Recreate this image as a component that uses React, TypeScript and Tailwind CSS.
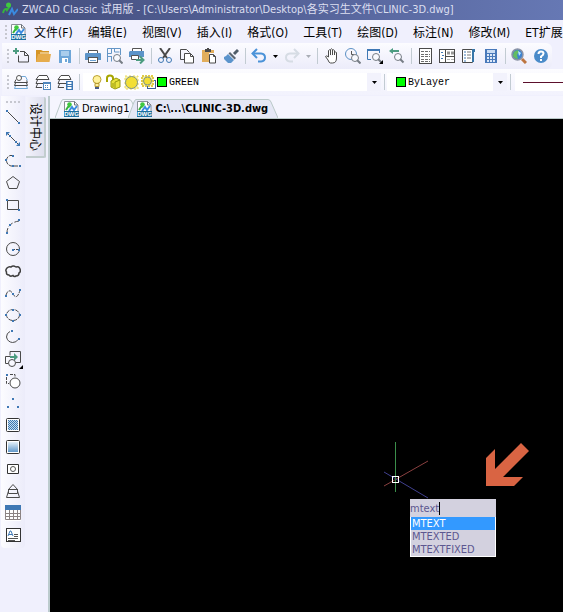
import { useState } from "react";
import type { ReactNode } from "react";

type Tool = { name: string; icon: ReactNode };

const ui = "font-['DejaVu_Sans_Condensed','Noto_Sans_CJK_SC',sans-serif]";

function Svg({ children, w = 16, h = 16 }: { children: ReactNode; w?: number; h?: number }) {
  return (
    <svg width={w} height={h} viewBox={`0 0 ${w} ${h}`} fill="none" className="block shrink-0" aria-hidden="true">
      {children}
    </svg>
  );
}

const ink = "#4a4a4a";
const blue = "#3f78b4";

function Dot({ x, y }: { x: number; y: number }) {
  return <rect x={x} y={y} width="2" height="2" fill={blue} />;
}

function LogoMark() {
  return (
    <g>
      <path d="M1 11c1-4 3-5 4-3l3-4" stroke="#35b53c" strokeWidth="2" />
      <circle cx="6.500" cy="3" r="2.500" fill="#3fc840" />
      <path d="M7 13l3-6 2 5 4-5" stroke="#3a8be0" strokeWidth="2" />
    </g>
  );
}

function DwgIcon() {
  return (
    <Svg>
      <path d="M1.500 .5h10l3.500 3.500v11.500H1.500z" fill="#fff" stroke="#8a9099" />
      <path d="M11.500 .5v3.500H15" stroke="#6b7078" />
      <path d="M3 9l2-3 2-1" stroke="#35b53c" strokeWidth="2" />
      <circle cx="6.500" cy="3.500" r="2.300" fill="#3fc840" />
      <path d="M6 10l3-4 2 3 3-4" stroke="#3a8be0" strokeWidth="2" />
      <rect x="1" y="10" width="15" height="6" fill="#1c6f9e" />
      <text x="8.500" y="15" textAnchor="middle" fontSize="6" fontWeight="700" fill="#fff" fontFamily="Liberation Sans, sans-serif">DWG</text>
    </Svg>
  );
}

function Lens({ x, y }: { x: number; y: number }) {
  return (
    <g stroke="#777d85">
      <circle cx={x} cy={y} r="3.500" fill="#f8f9fe" />
      <path d={`M${x + 2} ${y + 2}l3.500 3.500`} strokeWidth="2" />
    </g>
  );
}

function Printer() {
  return (
    <g>
      <rect x="3" y="2" width="10" height="4" fill="#fff" />
      <path d="M3.500 6V2.500h9V6" stroke="#555" />
      <path d="M1 5h14a1 1 0 0 1 1 1v6H0V6a1 1 0 0 1 1-1z" fill="#5c94c9" />
      <rect x="3.500" y="9.500" width="9" height="5" fill="#fff" stroke="#555" />
      <path d="M5 12.500h6" stroke="#6aa0d2" />
    </g>
  );
}

const fileTools: Tool[] = [
  {
    name: "New",
    icon: (
      <Svg>
        <path d="M5.500 7.500v6.500h10V7.500l-4-4H7" stroke={ink} />
        <path d="M11.500 3.500v4h4" stroke={ink} />
        <path d="M0 3h6M3 0v6" stroke="#4c9c80" strokeWidth="2" />
      </Svg>
    ),
  },
  {
    name: "Open",
    icon: (
      <Svg>
        <path d="M1 2h5l2 1h6v3H1z" fill="#d69526" />
        <path d="M1 5h2v9H1z" fill="#d69526" />
        <path d="M3 6h13l-1.500 8H1z" fill="#e6ac4c" />
        <path d="M5 5h10" stroke="#fff3d8" />
      </Svg>
    ),
  },
  {
    name: "Save",
    icon: (
      <Svg>
        <rect x="2" y="2" width="12" height="13" fill="#6ea6d8" />
        <rect x="4" y="3" width="8" height="5" fill="#a9cdec" />
        <rect x="5" y="10" width="6" height="5" fill="#fff" />
        <rect x="8" y="11" width="2" height="3" fill="#6ea6d8" />
      </Svg>
    ),
  },
];

const printTools: Tool[] = [
  { name: "Print", icon: <Svg><Printer /></Svg> },
  {
    name: "Print preview",
    icon: (
      <Svg>
        <path d="M.5 14V.5h13V7M.5 5.500h4v-5M5 8.500H1M7.500 1v3h5M4.500 13.500V9" stroke="#6596c6" />
        <Lens x={10} y={10} />
      </Svg>
    ),
  },
  {
    name: "Publish",
    icon: (
      <Svg>
        <path d="M3.500 4V.5h9V4" fill="#fff" stroke="#555" />
        <path d="M1 3h14v6H0V4z" fill="#5c94c9" />
        <path d="M2.500 7.500h7v4h-7z" fill="#fff" stroke="#555" />
        <path d="M7 12h7M11 8.500l3.500 3.500-3.500 3.500" stroke="#4c9c80" strokeWidth="2" />
      </Svg>
    ),
  },
];

const editTools: Tool[] = [
  {
    name: "Cut",
    icon: (
      <Svg>
        <path d="M3 0l7 10M13 0L6 10" stroke="#4a4a4a" strokeWidth="2" />
        <circle cx="4" cy="12" r="2.500" stroke={blue} />
        <circle cx="12" cy="12" r="2.500" stroke={blue} />
      </Svg>
    ),
  },
  {
    name: "Copy",
    icon: (
      <Svg>
        <path d="M5 11.500H1.500V1.500h6l3 3" stroke={ink} />
        <path d="M5.500 5.500h6l3 3v6.500h-9z" fill="#fff" stroke={ink} />
        <path d="M11.500 5.500v3h3" stroke={ink} />
      </Svg>
    ),
  },
  {
    name: "Paste",
    icon: (
      <Svg>
        <path d="M1 2h12v3H8v9H1z" fill="#e2ae5c" />
        <path d="M4 1h2V0h2v1h2v3H4z" fill="#4a4a4a" />
        <path d="M8.500 6.500h4l2 2V15h-6z" fill="#fff" stroke={ink} />
        <path d="M12.500 6.500v2h2" stroke={ink} />
      </Svg>
    ),
  },
  {
    name: "Match properties",
    icon: (
      <Svg>
        <path d="M15 2l-4 4" stroke="#4f5c68" strokeWidth="3" />
        <path d="M7 4l6 6-1.500 1.500-6-6z" fill="#5b6672" />
        <path d="M5 6l6 6-3 3H5l-4-4v-2l2-1z" fill="#5b94cc" />
      </Svg>
    ),
  },
];

const viewTools: Tool[] = [
  {
    name: "Pan",
    icon: (
      <Svg>
        <path d="M5.500 9V2.500q1-1.500 2 0V7M7.500 7V1.500q1-1.500 2 0V7M9.500 7V2.500q1-1.500 2 0V7M11.500 7V4.500q1-1 2 0V10q0 5-4 5H7.500Q6 15 5 12L2.500 8.500q1-1.500 3 .5" fill="#fff" stroke={ink} />
      </Svg>
    ),
  },
  {
    name: "Zoom realtime",
    icon: (
      <Svg>
        <circle cx="6" cy="6" r="5.500" stroke="#5c90c4" />
        <path d="M6.500 3v3.500H9" stroke="#555" />
        <Lens x={10} y={10} />
      </Svg>
    ),
  },
  {
    name: "Zoom window",
    icon: (
      <Svg>
        <path d="M4 11.500H.5v-10h12V5" stroke={blue} />
        <path d="M0 2h13" stroke={blue} strokeWidth="2" />
        <Lens x={9} y={9} />
        <path d="M16 12v4h-4z" fill="#000" />
      </Svg>
    ),
  },
  {
    name: "Zoom previous",
    icon: (
      <Svg>
        <path d="M2 3h8" stroke="#4c9c80" strokeWidth="2" />
        <path d="M0 3l4-3v6z" fill="#4c9c80" />
        <Lens x={9} y={9} />
      </Svg>
    ),
  },
];

const panelTools: Tool[] = [
  {
    name: "Properties",
    icon: (
      <Svg>
        <rect x="2.500" y=".5" width="12" height="15" fill="#fff" stroke={ink} />
        <path d="M4 3.500h9M4 6.500h9M4 8.500h9M4 11.500h9M4 13.500h9" stroke="#6c6c6c" strokeDasharray="3 1" />
      </Svg>
    ),
  },
  {
    name: "Design center",
    icon: (
      <Svg>
        <rect x=".5" y="1.500" width="15" height="13" fill="#fff" stroke={ink} />
        <path d="M6.500 2v12M7 8.500h8" stroke={ink} />
        <path d="M8 5h3M12 5h3" stroke="#969696" strokeWidth="3" />
        <path d="M8 11.500h3M12 11.500h3" stroke="#b5b5b5" />
        <path d="M2 4.500h2M3 7.500h2M2 10.500h2" stroke={blue} />
      </Svg>
    ),
  },
  {
    name: "Tool palettes",
    icon: (
      <Svg>
        <path d="M1.500 1.500h10v13h-10z" fill="#fff" stroke={ink} />
        <path d="M11 1h3v3h-1v10h-2" fill="#3675a8" />
        <path d="M3 4h2M3 7h2M3 10h2M3 13h2" stroke={blue} />
        <path d="M6 4h4M6 7h4M6 10h4" stroke="#777" />
      </Svg>
    ),
  },
  {
    name: "Calculator",
    icon: (
      <Svg>
        <rect x="2" y="1" width="12" height="14" fill="#4979ba" />
        <rect x="4" y="2" width="8" height="3" fill="#c9dcf4" />
        <path d="M4 7h8M4 10h8M4 13h8" stroke="#dce8f8" strokeWidth="2" strokeDasharray="2 1" />
      </Svg>
    ),
  },
];

const helpTools: Tool[] = [
  {
    name: "Find",
    icon: (
      <Svg>
        <circle cx="6.500" cy="6.500" r="5.500" fill="#3d82d0" stroke="#8b93a5" strokeWidth="1.500" />
        <path d="M3 4q3-3 5-1L6 7l1 4Q2 10 2 7z" fill="#64bd61" />
        <path d="M7 3l3 2-2 3z" fill="#bcecff" />
        <path d="M11 11l4 4" stroke="#bd7541" strokeWidth="3" />
      </Svg>
    ),
  },
  {
    name: "Help",
    icon: (
      <Svg>
        <circle cx="8" cy="8" r="7" fill="#4a8bc9" />
        <path d="M5.500 6q0-2.500 2.500-2.500t2.500 2q0 1.500-2.500 3v1.500M8 11v2" stroke="#fff" strokeWidth="2" />
      </Svg>
    ),
  },
];

function Layers({ children }: { children?: ReactNode }) {
  return (
    <Svg>
      <path d="M4 1.500h8l2 4H1z" fill="#fff" stroke={ink} />
      <path d="M2.500 6L1 9.500h13M2.500 10L1 13.500h6" stroke={ink} />
      {children}
    </Svg>
  );
}

const layerTools: Tool[] = [
  {
    name: "Layer manager",
    icon: (
      <Svg>
        <path d="M8 2.500h4.500l2 4" stroke="#71a9d8" />
        <path d="M3 5.500L1.500 8.500h13l-1-2M2.500 9L1.500 11.500h13L13.500 9" stroke={ink} />
        <path d="M2.500 12L1.500 14.500h13L13.500 12" stroke="#71a9d8" />
        <circle cx="6" cy="4" r="2.500" fill="#fff" stroke="#555" />
      </Svg>
    ),
  },
  {
    name: "Layer states",
    icon: (
      <Layers>
        <rect x="8" y="8" width="8" height="8" fill="#4f86bd" />
        <rect x="9" y="10" width="6" height="5" fill="#fff" />
        <path d="M10 11.500h4M10 13.500h4" stroke="#4f86bd" strokeDasharray="1 1" />
      </Layers>
    ),
  },
  {
    name: "Layer properties",
    icon: (
      <Layers>
        <rect x="9" y="7" width="7" height="9" fill={blue} />
        <path d="M10.500 9h4M10.500 14h4" stroke="#fff" strokeWidth="2" />
        <path d="M10.500 11.500h4" stroke="#fff" />
      </Layers>
    ),
  },
];

const drawTools: Tool[] = [
  { name: "Line", icon: <Svg><path d="M2 2l12 12" stroke={ink} /><Dot x={1} y={1} /><Dot x={13} y={13} /></Svg> },
  {
    name: "Construction line",
    icon: (
      <Svg>
        <path d="M2 2l12 12" stroke={ink} />
        <path d="M1 1h4L1 5zM15 15v-4l-4 4z" fill={blue} />
        <Dot x={4} y={4} /><Dot x={10} y={10} />
      </Svg>
    ),
  },
  {
    name: "Polyline",
    icon: (
      <Svg>
        <path d="M8 2.500H5Q1.500 4 1.500 7.500q0 4 4.500 5.500h8" stroke={ink} strokeDasharray="4 1" />
        <Dot x={7} y={2} /><Dot x={0} y={6} /><Dot x={7} y={12} /><Dot x={14} y={12} />
      </Svg>
    ),
  },
  { name: "Polygon", icon: <Svg><path d="M8 1.500l6.500 5-2.500 7H4l-2.500-7z" stroke={ink} /></Svg> },
  { name: "Rectangle", icon: <Svg><path d="M2.500 3.500h11v9h-11z" stroke={ink} /><Dot x={1} y={2} /><Dot x={13} y={12} /></Svg> },
  { name: "Arc", icon: <Svg><path d="M2 14Q2 4 14 2" stroke={ink} strokeDasharray="5 2" /><Dot x={1} y={13} /><Dot x={4} y={5} /><Dot x={13} y={0} /></Svg> },
  { name: "Circle", icon: <Svg><circle cx="8" cy="8" r="6.500" stroke={ink} /><path d="M8 8.500h6" stroke={ink} strokeDasharray="2 1" /><Dot x={7} y={8} /><Dot x={13} y={8} /></Svg> },
  {
    name: "Revision cloud",
    icon: <Svg><path d="M4 12Q1 12 1.500 9 0 7 2 5q2-2 4-1 2-2 5 0 3-1 4 2 1 3-1 4 0 3-3 3-2 1-3-.5Q5 14 4 12z" stroke="#3f3f3f" strokeWidth="1.500" /></Svg>,
  },
  { name: "Spline", icon: <Svg><path d="M1 10q3-8 7-1t7-4" stroke={ink} strokeDasharray="4 1" /><Dot x={0} y={10} /><Dot x={7} y={8} /><Dot x={14} y={4} /></Svg> },
  {
    name: "Ellipse",
    icon: (
      <Svg>
        <ellipse cx="8" cy="8" rx="6.500" ry="5.500" stroke={ink} strokeDasharray="4 1" />
        <Dot x={7} y={2} /><Dot x={0} y={7} /><Dot x={14} y={7} /><Dot x={7} y={13} />
      </Svg>
    ),
  },
  { name: "Elliptical arc", icon: <Svg><path d="M5 2.500Q1.500 4 1.500 8q1 5 6 5.500 4 0 5.500-3" stroke={ink} /><Dot x={6} y={1} /><Dot x={13} y={9} /></Svg> },
  {
    name: "Insert block",
    icon: (
      <Svg>
        <path d="M5 4.500V.5h10.500v11H11M3 12.500H.5V5.500H5" stroke={ink} />
        <path d="M5 6h5" stroke="#4c9c80" strokeWidth="2" />
        <path d="M9 2l4 4-4 4z" fill="#4c9c80" />
        <circle cx="7" cy="12" r="3.500" fill="#f8f8ff" stroke={ink} />
      </Svg>
    ),
  },
  { name: "Make block", icon: <Svg><path d="M5 1.500h5V4M1.500 4v6.500H4" stroke={ink} strokeDasharray="3 1" /><circle cx="10" cy="10" r="5" fill="#fff" stroke={ink} /><Dot x={1} y={1} /></Svg> },
  { name: "Point", icon: <Svg><Dot x={7} y={3} /><Dot x={2} y={11} /><Dot x={12} y={11} /></Svg> },
  {
    name: "Hatch",
    icon: (
      <Svg>
        <defs>
          <pattern id="check" width="2" height="2" patternUnits="userSpaceOnUse">
            <rect width="2" height="2" fill="#c2dcf1" />
            <path d="M0 0h1v1H0zM1 1h1v1H1z" fill="#3e78b0" />
          </pattern>
        </defs>
        <rect x="1.500" y="1.500" width="13" height="13" rx="1" fill="#fff" stroke="#333" />
        <rect x="3" y="3" width="10" height="10" fill="url(#check)" />
      </Svg>
    ),
  },
  {
    name: "Gradient",
    icon: (
      <Svg>
        <defs>
          <linearGradient id="fade" x2="0" y2="1">
            <stop stopColor="#e2eff9" />
            <stop offset="1" stopColor="#6198ca" />
          </linearGradient>
        </defs>
        <rect x="1.500" y="1.500" width="13" height="13" rx="1" fill="#fff" stroke="#333" />
        <rect x="3" y="3" width="10" height="10" fill="url(#fade)" />
      </Svg>
    ),
  },
  { name: "Region", icon: <Svg><path d="M2.500 3.500h11v9h-11z" fill="#fff" stroke="#333" /><circle cx="8" cy="8" r="2.500" stroke="#555" /></Svg> },
  { name: "Wipeout", icon: <Svg><path d="M3.500 6.500L8 1.500l4.500 5v4h-9zM3.500 8L1.500 14.500h13L12.500 8M3 6.500h10" stroke={ink} /></Svg> },
  {
    name: "Table",
    icon: (
      <Svg>
        <rect y="1" width="16" height="15" fill="#fff" />
        <path d="M.5 5v9.500h15V5M4.500 5v10M8.500 5v10M12.500 5v10M1 8.500h14M1 11.500h14" stroke="#8b8383" />
        <rect y="0" width="16" height="5" fill={blue} />
      </Svg>
    ),
  },
  {
    name: "Multiline text",
    icon: (
      <Svg>
        <rect x="1.500" y="1.500" width="14" height="13" fill="#fff" stroke="#333" />
        <path d="M3 9l2-5h1l2 5M4 7.500h3" stroke={blue} />
        <path d="M9 7.500h4M9 9.500h4M3 11.500h10M3 13.500h7" stroke="#555" />
      </Svg>
    ),
  },
];

const menus = ["文件(F)", "编辑(E)", "视图(V)", "插入(I)", "格式(O)", "工具(T)", "绘图(D)", "标注(N)", "修改(M)", "ET扩展工具(X)"];

function Grip() {
  return (
    <span className="flex w-2 shrink-0 flex-col items-end gap-[2px] pr-[1px]">
      {[0, 1, 2, 3].map((i) => <i key={i} className="size-[2px] bg-[#c6c7cf]" />)}
    </span>
  );
}

function Divider() {
  return (
    <span className="flex h-full w-[6px] shrink-0 items-center justify-center">
      <i className="h-4 w-px bg-[#c2cbd2]" />
    </span>
  );
}

function Tools({ items }: { items: Tool[] }) {
  return (
    <>
      {items.map((t) => (
        <button key={t.name} aria-label={t.name} className="flex size-[22px] shrink-0 items-center justify-center">
          {t.icon}
        </button>
      ))}
    </>
  );
}

function Caret({ color = "#000" }: { color?: string }) {
  return <Svg w={5} h={3}><path d="M0 0h5L2.500 3z" fill={color} /></Svg>;
}

function History({ name, color, flip, caret }: { name: string; color: string; flip?: boolean; caret: string }) {
  return (
    <>
      <button aria-label={name} className="flex size-[22px] shrink-0 items-center justify-center">
        <Svg>
          <g transform={flip ? "matrix(-1 0 0 1 16 0)" : undefined}>
            <path d="M3 5.500h7q4 .5 4 4t-4 4H7" stroke={color} strokeWidth="2" />
            <path d="M6 1L1.500 5.500 6 10" stroke={color} strokeWidth="2" />
          </g>
        </Svg>
      </button>
      <button aria-label={`${name} list`} className="flex h-[22px] w-[11px] shrink-0 items-center justify-center">
        <Caret color={caret} />
      </button>
    </>
  );
}

function Choice({ label, value }: { label: string; value: string }) {
  return (
    <span className="relative flex h-full min-w-0 flex-1 items-center">
      <select aria-label={label} defaultValue={value} className="h-full w-full appearance-none bg-transparent font-['Liberation_Mono',monospace] text-[10px] text-black outline-none">
        <option>{value}</option>
      </select>
      <span className="pointer-events-none absolute inset-y-0 right-0 flex w-[14px] items-center justify-center bg-[#f2f2fc]">
        <Caret />
      </span>
    </span>
  );
}

function LayerStatus() {
  return (
    <span className="flex shrink-0 items-center gap-[2px] pr-[1px] pl-2">
      <Svg w={12}>
        <circle cx="6" cy="5.500" r="4" fill="#fff29b" stroke="#bda233" />
        <path d="M4 9.500h4v3H4z" fill="#fff0a0" stroke="#b79b31" />
        <path d="M4 14h4" stroke="#4a5c86" strokeWidth="2" />
      </Svg>
      <Svg>
        <path d="M2 8V4q0-2.500 3-2.500T8 4v4" stroke="#a7a500" strokeWidth="2" />
        <path d="M6 7l5-3 4 2v7l-5 2-4-2z" fill="#e8e23a" stroke="#98980f" />
        <path d="M10 8v6M10 8l5-2M7 10h2M7 12h2" stroke="#98980f" />
      </Svg>
      <Svg>
        <path d="M2 2h13v13H2z" fill="#fbf3a8" stroke="#e8d65d" strokeDasharray="2 2" />
        <circle cx="8.500" cy="8.500" r="6" fill="#f3df35" stroke="#7c928a" />
      </Svg>
      <Svg w={15}>
        <rect x="6.500" y="6.500" width="8" height="8" fill="#fff" stroke="#3d609b" />
        <path d="M1 2h11v10H1z" fill="#fbf3a8" stroke="#dfcb49" strokeWidth="2" strokeDasharray="2 1" />
        <circle cx="6.500" cy="7" r="4" fill="#f3df35" stroke="#7c928a" />
      </Svg>
    </span>
  );
}

function Swatch() {
  return <i className="mr-[2px] size-[10px] shrink-0 border border-black bg-[#00ff00]" />;
}

function Tab({ label, active }: { label: string; active?: boolean }) {
  const fill = active ? "#e5e7f5" : "#f5f5fe";
  return (
    <button role="tab" aria-selected={!!active} className={`flex h-[19px] shrink-0 items-stretch ${active ? "relative -ml-[11px] font-bold" : ""}`}>
      <Svg w={8} h={19}><path d="M0 19L6 3Q7 .5 8 .5V19z" fill={fill} /><path d="M0 19L6 3Q7 .5 8 .5" stroke="#bac9c8" /></Svg>
      <span className={`flex items-center gap-[3px] border-t border-[#bac9c8] text-[11px] ${active ? "bg-[#e5e7f5]" : "bg-[#f5f5fe]"}`}>
        <DwgIcon />
        <span className="whitespace-nowrap">{label}</span>
      </span>
      <Svg w={10} h={19}><path d="M0 .5Q2 .5 3 3l7 16H0z" fill={fill} /><path d="M0 .5Q2 .5 3 3l7 16" stroke="#bac9c8" /></Svg>
    </button>
  );
}

export default function App() {
  const [command, setCommand] = useState("mtext");
  return (
    <div className={`flex min-h-screen flex-col overflow-hidden bg-[#f0f0fd] text-black ${ui}`}>
      <header className="flex h-5 items-center gap-1 bg-linear-to-r from-[#434d7d] to-[#6678b4] pl-[2px] text-[11px] whitespace-nowrap text-[#dcdff0]">
        <Svg><LogoMark /></Svg>
        <h1>ZWCAD Classic 试用版 - [C:\Users\Administrator\Desktop\各实习生文件\CLINIC-3D.dwg]</h1>
      </header>

      <nav className="flex h-[23px] items-center overflow-hidden text-[12px]" aria-label="Menu">
        <Grip />
        <span className="pr-2 pl-[2px]"><DwgIcon /></span>
        <span className="flex gap-[15px] pt-[2px]">
          {menus.map((m) => <button key={m} className="shrink-0 whitespace-nowrap">{m}</button>)}
        </span>
      </nav>

      <div className="flex">
        <div className="ml-[2px] flex h-[26px] items-center rounded-r-md bg-linear-to-b from-[#fcfcff] to-[#ececfa]" role="toolbar" aria-label="Standard">
          <Grip />
          <Tools items={fileTools} />
          <Divider />
          <Tools items={printTools} />
          <Divider />
          <Tools items={editTools} />
          <Divider />
          <History name="Undo" color="#4a92d8" caret="#000" />
          <History name="Redo" color="#d6dce4" caret="#a9adb5" flip />
          <Divider />
          <Tools items={viewTools} />
          <Divider />
          <Tools items={panelTools} />
          <Divider />
          <Tools items={helpTools} />
        </div>
      </div>

      <div className="mb-px ml-[2px] flex h-[26px] items-center bg-linear-to-b from-[#fcfcff] to-[#f2f2fd]" role="toolbar" aria-label="Layers">
        <Grip />
        <Tools items={layerTools} />
        <Divider />
        <div className="ml-[1px] flex h-[18px] w-[298px] shrink-0 items-center bg-white">
          <LayerStatus />
          <Swatch />
          <Choice label="Layer" value="GREEN" />
        </div>
        <Divider />
        <div className="flex h-[18px] w-[120px] shrink-0 items-center bg-white pl-[9px]">
          <Swatch />
          <Choice label="Color" value="ByLayer" />
        </div>
        <Divider />
        <button aria-label="Linetype" className="ml-[2px] flex h-[18px] min-w-0 flex-1 items-center bg-white pl-2">
          <i className="h-px flex-1 bg-[#5c0f2c]" />
        </button>
      </div>

      <div className="flex flex-1">
        <aside className="ml-[1px] w-6 shrink-0 self-start rounded-b-sm bg-linear-to-r from-[#fcfcff] to-[#ececfa] pt-[5px] pb-[2px]" role="toolbar" aria-label="Draw">
          <div className="flex h-[5px] justify-center gap-[2px]">
            {[0, 1, 2, 3].map((i) => <i key={i} className="size-[2px] bg-[#c6c7cf]" />)}
          </div>
          <div className="relative flex flex-col items-center">
            <Tools items={drawTools} />
            <svg width="4" height="4" className="absolute top-[259px] right-[2px]" aria-hidden="true"><path d="M4 0v4H0z" /></svg>
          </div>
        </aside>
        <button className="mt-[1px] ml-[1px] flex h-[61px] w-5 shrink-0 items-center justify-center rounded-r-xs border-r-2 border-b-2 border-[#c2cdce] bg-linear-to-r from-[#f3f3fc] to-[#dedfed] pt-[2px] text-[12px] [writing-mode:vertical-rl] [text-orientation:sideways]">
          设计中心
        </button>
        <section className="ml-[2px] flex min-w-0 flex-1 flex-col border-l-2 border-[#bccbcd]">
          <div className="flex h-[23px] items-end border-b border-[#bac9c8] bg-[#f5f5fe] pt-[3px] pl-[5px]" role="tablist">
            <Tab label="Drawing1" />
            <Tab label="C:\...\CLINIC-3D.dwg" active />
          </div>
          <main className="relative flex-1 overflow-hidden bg-black">
            <svg width="46" height="58" className="absolute top-[322px] left-[333px]" fill="none" aria-hidden="true">
              <path d="M1 45l44-25" stroke="#8a4040" />
              <path d="M1 31l44 26" stroke="#40408f" />
              <path d="M12.500 1v50" stroke="#3b8e4a" />
              <rect x="9.500" y="35.500" width="6" height="6" stroke="#fff" />
            </svg>
            <svg width="43" height="44" className="absolute top-[323px] left-[436px]" aria-hidden="true">
              <path d="M35 1l8 8-26 26h20l-9 9H0V16l9-9v20z" fill="#d96443" />
            </svg>
            <div className="absolute top-[380px] left-[360px] w-[86px] bg-[#d3d1df] text-[11px] text-[#5c5790]">
              <div className="flex h-[18px] items-center">
                <input
                  aria-label="Command"
                  value={command}
                  onChange={(e) => setCommand(e.target.value)}
                  className="field-sizing-content h-full bg-transparent outline-none"
                />
                <i className="h-[13px] w-px bg-black" />
              </div>
              <ul className="border-x border-b border-white">
                {["MTEXT", "MTEXTED", "MTEXTFIXED"].map((c, i) => (
                  <li key={c}>
                    <button className={`block h-[13px] w-full pl-px text-left leading-[13px] ${i === 0 ? "bg-[#3399ff] text-white" : ""}`}>{c}</button>
                  </li>
                ))}
              </ul>
            </div>
          </main>
        </section>
      </div>
    </div>
  );
}
